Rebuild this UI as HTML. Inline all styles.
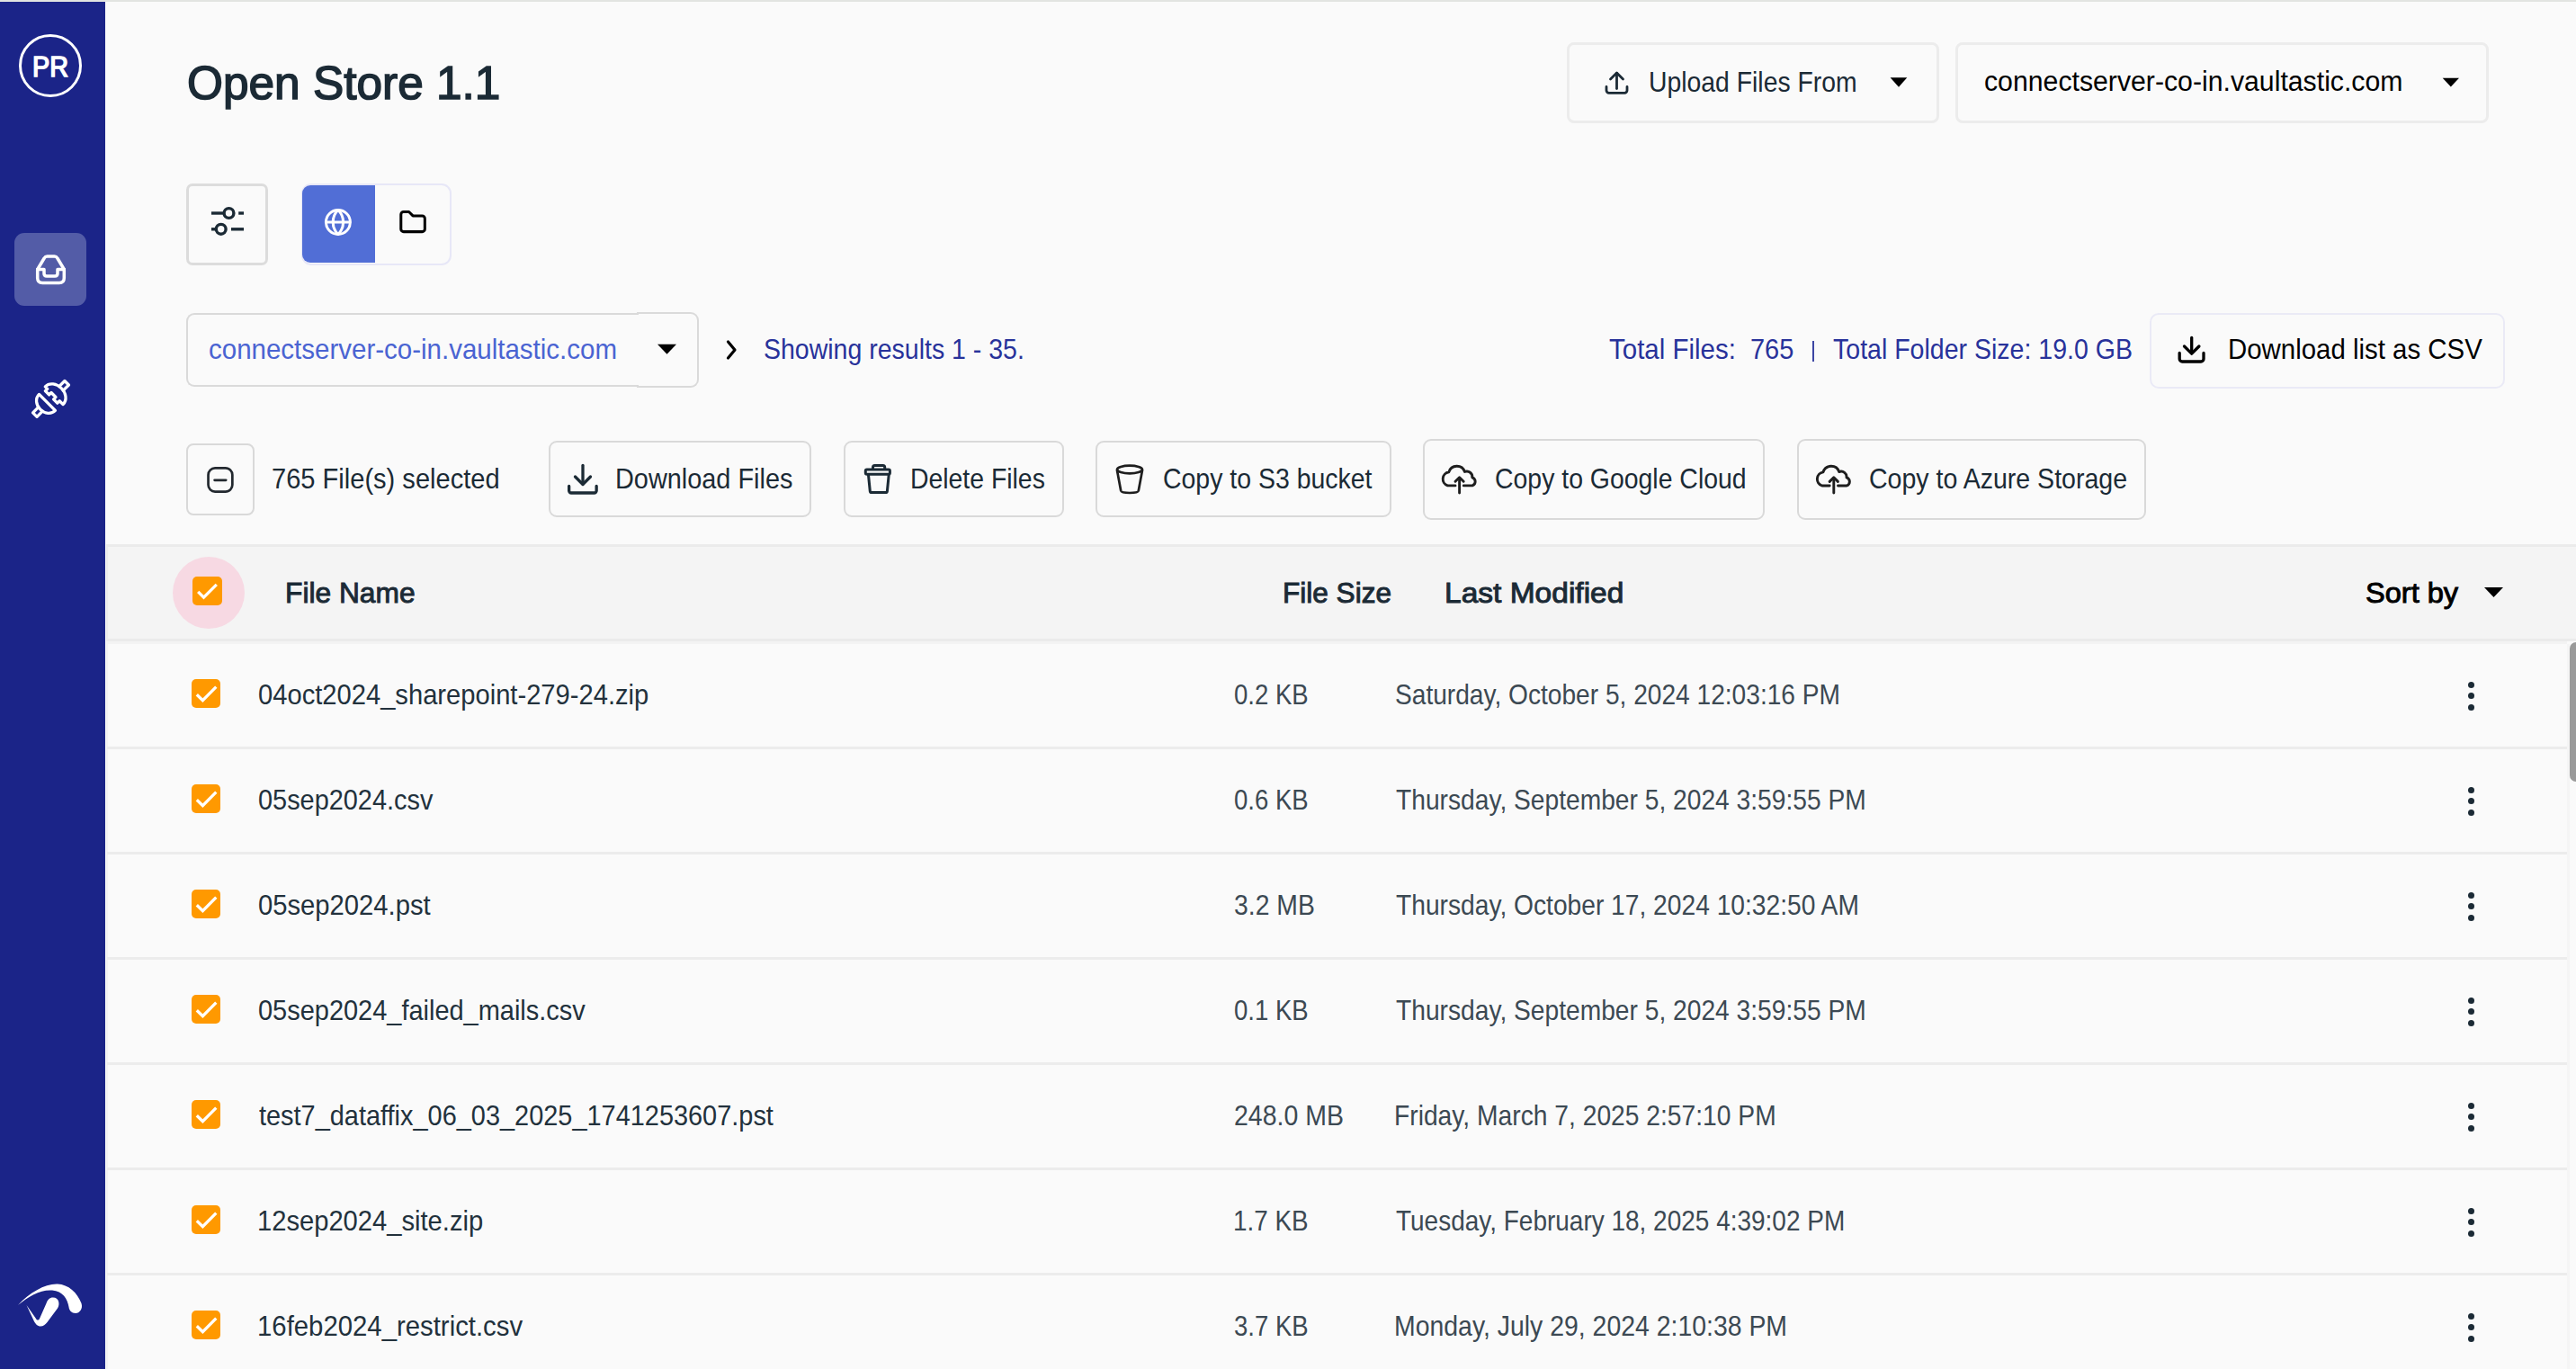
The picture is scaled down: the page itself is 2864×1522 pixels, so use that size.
<!DOCTYPE html>
<html><head><meta charset="utf-8"><title>Open Store 1.1</title>
<style>
html,body{margin:0;padding:0}
body{width:2864px;height:1522px;overflow:hidden;position:relative;background:#fafafa;font-family:"Liberation Sans",sans-serif}
.a{position:absolute;box-sizing:border-box}
.t{position:absolute;white-space:nowrap;line-height:1;transform-origin:0 0}
.btn{position:absolute;box-sizing:border-box;border:2px solid #d9d9d9;border-radius:9px}
svg.i{position:absolute;overflow:visible}
</style></head><body>
<div class="a" style="left:0;top:0;width:2864px;height:2px;background:#e2e4e1"></div>
<!-- sidebar -->
<nav class="a" style="left:0;top:2px;width:117px;height:1520px;background:#1b2488">
</nav>
<div class="a" style="left:117px;top:2px;width:1px;height:1520px;background:#fdfdfb"></div>
<div class="a" style="left:21px;top:38px;width:70px;height:70px;border:3px solid #fff;border-radius:50%"></div>
<div class="a" style="left:16px;top:259px;width:80px;height:81px;border-radius:11px;background:#535ca7"></div>
<svg class="i" style="left:0;top:0" width="117" height="1522" viewBox="0 0 117 1522">
 <g fill="none" stroke="#fff" stroke-width="3.5" stroke-linecap="round" stroke-linejoin="round">
  <path d="M41.7 299.5 L49.2 287 Q50.3 285 52.5 285 L60.5 285 Q62.7 285 63.8 287 L71.3 299.5"/>
  <path d="M41.7 299.5 L41.7 309 Q41.7 314.5 47.2 314.5 L65.8 314.5 Q71.3 314.5 71.3 309 L71.3 299.5"/>
  <path d="M41.7 299.5 L49 299.5 L49 304 Q49 307 52 307 L61 307 Q64 307 64 304 L64 299.5 L71.3 299.5"/>
 </g>
 <g transform="translate(56.5 443.4) rotate(-45)" fill="none" stroke="#fff" stroke-width="3.3" stroke-linejoin="round" stroke-linecap="round">
  <path d="M-5.7 -12.7 L-5.7 12.7 C-12 12.7 -16.6 7 -16.6 0 C-16.6 -7 -12 -12.7 -5.7 -12.7 Z"/>
  <path d="M-16.6 -3.2 L-25 -3.2 L-25 3.2 L-16.6 3.2"/>
  <path d="M5.2 -14 L5.2 -10.5 L1.8 -10.5 L1.8 -4.5 L5.2 -4.5 L5.2 2.5 L1.8 2.5 L1.8 8.5 L5.2 8.5 L5.2 14 C12 14 16.6 7.5 16.6 0 C16.6 -7.5 12 -14 5.2 -14 Z"/>
  <path d="M16.6 -3.2 L25 -3.2 L25 3.2 L16.6 3.2"/>
 </g>
 <g fill="#fff">
  <path d="M20 1451 C 33 1437, 50 1427, 64 1427.5 C 76 1428, 86 1437, 90.5 1449 C 92.5 1455, 88.5 1460, 84 1460 C 79.5 1460, 77 1457, 76.5 1453 C 75 1444, 70 1435.5, 58 1434.5 C 45 1433.5, 32 1441, 20 1451 Z"/>
  <path d="M29.5 1451 L37 1467 C 39 1472, 42 1474.5, 45 1474.5 C 48 1474.5, 50.5 1472.5, 52.5 1470 L64 1454.5 C 67 1450, 65.5 1442.5, 59 1442.5 C 55 1442.5, 53 1445, 51.5 1449 L 44 1466 C 43 1468, 41 1468, 40 1466 Z"/>
 </g>
</svg>

<!-- top right buttons -->
<div class="a" style="left:1741.8px;top:46.8px;width:414.4px;height:90px;border:3px solid #ececec;border-radius:8px"></div>
<div class="a" style="left:2173.8px;top:47px;width:593.6px;height:89.8px;border:3px solid #ececec;border-radius:8px"></div>
<svg class="i" style="left:1740px;top:40px" width="1040" height="110" viewBox="1740 40 1040 110">
 <g fill="none" stroke="#1b2a35" stroke-width="2.8" stroke-linecap="round" stroke-linejoin="round">
  <path d="M1786 96.5 v4 a2.8 2.8 0 0 0 2.8 2.8 h17.4 a2.8 2.8 0 0 0 2.8 -2.8 v-4"/>
  <path d="M1790.5 88 L1797.5 81 L1804.5 88"/>
  <path d="M1797.5 81.5 V98.5"/>
 </g>
 <path d="M2101.6 86.3 L2120.3 86.3 L2111 96.7 Z" fill="#000"/>
 <path d="M2715.7 86.8 L2734 86.8 L2724.85 96.5 Z" fill="#000"/>
</svg>

<!-- filter / toggle -->
<div class="a" style="left:207px;top:204px;width:91px;height:91px;border:3px solid #dcdcdc;border-radius:7px"></div>
<div class="a" style="left:334.5px;top:204px;width:167px;height:90.5px;border:2px solid #e7e7f7;border-radius:11px"></div>
<div class="a" style="left:336px;top:206px;width:81px;height:86px;background:#516ed6;border-radius:9px 0 0 9px"></div>
<svg class="i" style="left:200px;top:200px" width="300" height="100" viewBox="200 200 300 100">
 <g fill="none" stroke="#1b2a35" stroke-width="3.4">
  <path d="M235 237 H248.3"/><circle cx="254.5" cy="237" r="5.4"/><path d="M265.2 237 H271"/>
  <path d="M235 254.8 H239.7"/><circle cx="245.7" cy="254.8" r="5.4"/><path d="M257 254.8 H271"/>
 </g>
 <g fill="none" stroke="#fff" stroke-width="3" stroke-linecap="round">
  <circle cx="375.9" cy="247" r="13.5"/><path d="M363 247 H388.8"/><path d="M375.9 233.5 A18.8 18.8 0 0 0 375.9 260.5"/><path d="M375.9 233.5 A18.8 18.8 0 0 1 375.9 260.5"/>
 </g>
 <g transform="translate(441.35 229.6) scale(1.475)" fill="none" stroke="#000" stroke-width="2.05" stroke-linecap="round" stroke-linejoin="round">
  <path d="M5 4h4l3 3h7a2 2 0 0 1 2 2v8a2 2 0 0 1 -2 2h-14a2 2 0 0 1 -2 -2v-11a2 2 0 0 1 2 -2"/>
 </g>
</svg>

<!-- select row -->
<div class="a" style="left:207px;top:348px;width:503px;height:82px;border:2.2px solid #dadada;border-right:none;border-radius:9px 0 0 9px"></div>
<div class="a" style="left:708px;top:347px;width:68.8px;height:84px;border:2.2px solid #dadada;border-left:none;border-radius:0 9px 9px 0"></div>
<div class="a" style="left:2390px;top:347.5px;width:395px;height:84px;border:2.5px solid #eaeaf6;border-radius:10px"></div>
<svg class="i" style="left:700px;top:340px" width="2100" height="100" viewBox="700 340 2100 100">
 <path d="M731 382.7 L752 382.7 L741.5 393.75 Z" fill="#000"/>
 <path d="M809.5 380 L817 389 L809.5 398" fill="none" stroke="#000" stroke-width="3.2" stroke-linecap="round" stroke-linejoin="round"/>
 <path d="M2016 379 V402" stroke="#27319a" stroke-width="1.8"/>
 <g fill="none" stroke="#000" stroke-width="3.3" stroke-linecap="round" stroke-linejoin="round">
  <path d="M2423.2 392.5 v6.5 a3 3 0 0 0 3 3 h20.8 a3 3 0 0 0 3 -3 v-6.5"/>
  <path d="M2428.5 385 L2436.7 393.2 L2444.9 385"/>
  <path d="M2436.7 375.5 V392.5"/>
 </g>
</svg>

<!-- action row -->
<div class="btn" style="left:207px;top:493px;width:76px;height:80px;border-width:2.2px;border-radius:8px"></div>
<div class="btn" style="left:609.7px;top:489.7px;width:292.4px;height:85.6px"></div>
<div class="btn" style="left:937.5px;top:489.7px;width:245.0px;height:85.6px"></div>
<div class="btn" style="left:1217.5px;top:489.7px;width:329.0px;height:85.2px"></div>
<div class="btn" style="left:1581.9px;top:487.6px;width:379.9px;height:90.3px"></div>
<div class="btn" style="left:1997.9px;top:487.9px;width:388.5px;height:90.1px"></div>
<svg class="i" style="left:200px;top:480px" width="2200" height="110" viewBox="200 480 2200 110">
 <g fill="none" stroke="#22282e" stroke-width="2.7" stroke-linecap="round" stroke-linejoin="round">
  <rect x="231.55" y="520.45" width="26.8" height="26.1" rx="7.5"/>
  <path d="M238.6 533.8 H251.2"/>
 </g>
 <g fill="none" stroke="#1b2a35" stroke-width="3.3" stroke-linecap="round" stroke-linejoin="round">
  <path d="M632.65 540.5 v5 a2.5 2.5 0 0 0 2.5 2.5 h25.5 a2.5 2.5 0 0 0 2.5 -2.5 v-5"/>
  <path d="M639.5 530 L648 538.5 L656.5 530"/>
  <path d="M648 517.5 V538"/>
 </g>
 <g fill="none" stroke="#1b2a35" stroke-width="3" stroke-linecap="round" stroke-linejoin="round">
  <rect x="962.3" y="521.9" width="27.1" height="5.4" rx="1.5"/>
  <path d="M970.5 521.5 V519.5 a2 2 0 0 1 2 -2 h9.2 a2 2 0 0 1 2 2 V521.5"/>
  <path d="M965.5 528 L967.3 546 a1.8 1.8 0 0 0 1.8 1.6 h15.5 a1.8 1.8 0 0 0 1.8 -1.6 L988.2 528"/>
 </g>
 <g fill="none" stroke="#1e1e1e" stroke-width="2.7" stroke-linecap="round" stroke-linejoin="round">
  <ellipse cx="1256" cy="522" rx="14" ry="4.3"/>
  <path d="M1242 523 L1246.2 545.5 Q1246.8 548 1256 548 Q1265.2 548 1265.8 545.5 L1270 523"/>
 </g>
 <g fill="none" stroke="#1e1e1e" stroke-width="2.9" stroke-linecap="round" stroke-linejoin="round"><path d="M1618 539.9 H1609.5 A7.8 7.8 0 0 1 1610.8 524.8 A9.3 9.3 0 0 1 1628.5 524.5 A6 6 0 0 1 1636.8 530.8 A4.8 4.8 0 0 1 1637 539.9 H1627.3"/><path d="M1622.6 548 V531.5"/><path d="M1618 535.3 L1622.6 530.7 L1627.2 535.3"/></g>
 <g transform="translate(416.2 0.1)" fill="none" stroke="#1e1e1e" stroke-width="2.9" stroke-linecap="round" stroke-linejoin="round"><path d="M1618 539.9 H1609.5 A7.8 7.8 0 0 1 1610.8 524.8 A9.3 9.3 0 0 1 1628.5 524.5 A6 6 0 0 1 1636.8 530.8 A4.8 4.8 0 0 1 1637 539.9 H1627.3"/><path d="M1622.6 548 V531.5"/><path d="M1618 535.3 L1622.6 530.7 L1627.2 535.3"/></g>
</svg>

<!-- table -->
<div class="a" style="left:118px;top:605px;width:2746px;height:108px;background:#f4f4f4;border-top:3px solid #ebebeb;border-bottom:3px solid #ebebeb;border-left:2px solid #ececec"></div>
<div class="a" style="left:118px;top:713px;width:2736px;height:3px;background:#f3f3f3"></div>
<div class="a" style="left:118px;top:716px;width:2px;height:806px;background:#f3f3f3"></div>
<div class="a" style="left:192px;top:618.8px;width:80px;height:80px;border-radius:50%;background:#f7d9e3"></div>
<div class="a" style="left:214px;top:641px;width:33px;height:32px;border-radius:5px;background:#ff9900"></div>
<svg class="i" style="left:2750px;top:640px" width="40" height="30" viewBox="2750 640 40 30"><path d="M2762 653 L2783 653 L2772.5 664 Z" fill="#000"/></svg>
<div id="rows">
<div class="a" style="left:119px;top:830px;width:2735px;height:3px;background:#ececec"></div>
<div class="a" style="left:213px;top:755px;width:32px;height:32px;border-radius:5px;background:#ff9900"></div>
<div class="a" style="left:2743.6px;top:757.5px;width:7.2px;height:7.2px;border-radius:50%;background:#1b2a35"></div>
<div class="a" style="left:2743.6px;top:770.0px;width:7.2px;height:7.2px;border-radius:50%;background:#1b2a35"></div>
<div class="a" style="left:2743.6px;top:782.8px;width:7.2px;height:7.2px;border-radius:50%;background:#1b2a35"></div>
<div class="a" style="left:119px;top:947px;width:2735px;height:3px;background:#ececec"></div>
<div class="a" style="left:213px;top:872px;width:32px;height:32px;border-radius:5px;background:#ff9900"></div>
<div class="a" style="left:2743.6px;top:874.5px;width:7.2px;height:7.2px;border-radius:50%;background:#1b2a35"></div>
<div class="a" style="left:2743.6px;top:887.0px;width:7.2px;height:7.2px;border-radius:50%;background:#1b2a35"></div>
<div class="a" style="left:2743.6px;top:899.8px;width:7.2px;height:7.2px;border-radius:50%;background:#1b2a35"></div>
<div class="a" style="left:119px;top:1064px;width:2735px;height:3px;background:#ececec"></div>
<div class="a" style="left:213px;top:989px;width:32px;height:32px;border-radius:5px;background:#ff9900"></div>
<div class="a" style="left:2743.6px;top:991.5px;width:7.2px;height:7.2px;border-radius:50%;background:#1b2a35"></div>
<div class="a" style="left:2743.6px;top:1004.0px;width:7.2px;height:7.2px;border-radius:50%;background:#1b2a35"></div>
<div class="a" style="left:2743.6px;top:1016.8px;width:7.2px;height:7.2px;border-radius:50%;background:#1b2a35"></div>
<div class="a" style="left:119px;top:1181px;width:2735px;height:3px;background:#ececec"></div>
<div class="a" style="left:213px;top:1106px;width:32px;height:32px;border-radius:5px;background:#ff9900"></div>
<div class="a" style="left:2743.6px;top:1108.5px;width:7.2px;height:7.2px;border-radius:50%;background:#1b2a35"></div>
<div class="a" style="left:2743.6px;top:1121.0px;width:7.2px;height:7.2px;border-radius:50%;background:#1b2a35"></div>
<div class="a" style="left:2743.6px;top:1133.8px;width:7.2px;height:7.2px;border-radius:50%;background:#1b2a35"></div>
<div class="a" style="left:119px;top:1298px;width:2735px;height:3px;background:#ececec"></div>
<div class="a" style="left:213px;top:1223px;width:32px;height:32px;border-radius:5px;background:#ff9900"></div>
<div class="a" style="left:2743.6px;top:1225.5px;width:7.2px;height:7.2px;border-radius:50%;background:#1b2a35"></div>
<div class="a" style="left:2743.6px;top:1238.0px;width:7.2px;height:7.2px;border-radius:50%;background:#1b2a35"></div>
<div class="a" style="left:2743.6px;top:1250.8px;width:7.2px;height:7.2px;border-radius:50%;background:#1b2a35"></div>
<div class="a" style="left:119px;top:1415px;width:2735px;height:3px;background:#ececec"></div>
<div class="a" style="left:213px;top:1340px;width:32px;height:32px;border-radius:5px;background:#ff9900"></div>
<div class="a" style="left:2743.6px;top:1342.5px;width:7.2px;height:7.2px;border-radius:50%;background:#1b2a35"></div>
<div class="a" style="left:2743.6px;top:1355.0px;width:7.2px;height:7.2px;border-radius:50%;background:#1b2a35"></div>
<div class="a" style="left:2743.6px;top:1367.8px;width:7.2px;height:7.2px;border-radius:50%;background:#1b2a35"></div>
<div class="a" style="left:119px;top:1532px;width:2735px;height:3px;background:#ececec"></div>
<div class="a" style="left:213px;top:1457px;width:32px;height:32px;border-radius:5px;background:#ff9900"></div>
<div class="a" style="left:2743.6px;top:1459.5px;width:7.2px;height:7.2px;border-radius:50%;background:#1b2a35"></div>
<div class="a" style="left:2743.6px;top:1472.0px;width:7.2px;height:7.2px;border-radius:50%;background:#1b2a35"></div>
<div class="a" style="left:2743.6px;top:1484.8px;width:7.2px;height:7.2px;border-radius:50%;background:#1b2a35"></div>
</div>
<div class="a" style="left:2854px;top:716px;width:2.5px;height:806px;background:#f5f5f5"></div>
<div class="a" style="left:2857px;top:714px;width:7px;height:155px;background:#999;border-radius:7px 0 0 7px"></div>
<svg class="i" style="left:200px;top:600px" width="60" height="900" viewBox="200 600 60 900">
 <path d="M220.2 657.9 L226.5 664.2 L240.8 649.9" fill="none" stroke="#fff" stroke-width="3.3"/>
<path d="M218.8 772.2 L225.4 778.6 L240.3 763.7" fill="none" stroke="#fff" stroke-width="3.3"/>
<path d="M218.8 889.2 L225.4 895.6 L240.3 880.7" fill="none" stroke="#fff" stroke-width="3.3"/>
<path d="M218.8 1006.2 L225.4 1012.6 L240.3 997.7" fill="none" stroke="#fff" stroke-width="3.3"/>
<path d="M218.8 1123.2 L225.4 1129.6 L240.3 1114.7" fill="none" stroke="#fff" stroke-width="3.3"/>
<path d="M218.8 1240.2 L225.4 1246.6 L240.3 1231.7" fill="none" stroke="#fff" stroke-width="3.3"/>
<path d="M218.8 1357.2 L225.4 1363.6 L240.3 1348.7" fill="none" stroke="#fff" stroke-width="3.3"/>
<path d="M218.8 1474.2 L225.4 1480.6 L240.3 1465.7" fill="none" stroke="#fff" stroke-width="3.3"/>
</svg>
<div class="t" style="left:36.12px;top:59.26px;font-size:30.64px;font-weight:400;color:#ffffff;transform:scaleX(0.9402);-webkit-text-stroke:1.53px #ffffff;">PR</div>
<div class="t" style="left:207.64px;top:65.80px;font-size:52.44px;font-weight:400;color:#1b2a35;transform:scaleX(0.9797);-webkit-text-stroke:1.57px #1b2a35;">Open Store 1.1</div>
<div class="t" style="left:1833.49px;top:75.82px;font-size:31.4px;font-weight:400;color:#1b2a35;transform:scaleX(0.9033);">Upload Files From</div>
<div class="t" style="left:2205.95px;top:75.06px;font-size:31.82px;font-weight:400;color:#000;transform:scaleX(0.9505);">connectserver-co-in.vaultastic.com</div>
<div class="t" style="left:232.27px;top:372.82px;font-size:31.63px;font-weight:400;color:#4a64d2;transform:scaleX(0.9325);">connectserver-co-in.vaultastic.com</div>
<div class="t" style="left:848.87px;top:373.16px;font-size:30.52px;font-weight:400;color:#28329a;transform:scaleX(0.9338);">Showing results 1 - 35.</div>
<div class="t" style="left:1789.30px;top:373.36px;font-size:30.52px;font-weight:400;color:#28329a;transform:scaleX(0.9661);">Total Files:</div>
<div class="t" style="left:1945.55px;top:373.36px;font-size:30.52px;font-weight:400;color:#28329a;transform:scaleX(0.9501);">765</div>
<div class="t" style="left:2038.40px;top:373.36px;font-size:30.52px;font-weight:400;color:#28329a;transform:scaleX(0.9348);">Total Folder Size: 19.0 GB</div>
<div class="t" style="left:2476.81px;top:373.27px;font-size:31.1px;font-weight:400;color:#000;transform:scaleX(0.9457);">Download list as CSV</div>
<div class="t" style="left:301.57px;top:517.17px;font-size:31.1px;font-weight:400;color:#1b2a35;transform:scaleX(0.9348);">765 File(s) selected</div>
<div class="t" style="left:683.64px;top:517.07px;font-size:31.1px;font-weight:400;color:#1b2a35;transform:scaleX(0.9285);">Download Files</div>
<div class="t" style="left:1011.67px;top:517.07px;font-size:31.1px;font-weight:400;color:#1b2a35;transform:scaleX(0.9126);">Delete Files</div>
<div class="t" style="left:1292.68px;top:516.97px;font-size:31.1px;font-weight:400;color:#1b2a35;transform:scaleX(0.9150);">Copy to S3 bucket</div>
<div class="t" style="left:1662.29px;top:516.97px;font-size:31.1px;font-weight:400;color:#1b2a35;transform:scaleX(0.9139);">Copy to Google Cloud</div>
<div class="t" style="left:2077.88px;top:516.97px;font-size:31.1px;font-weight:400;color:#1b2a35;transform:scaleX(0.9175);">Copy to Azure Storage</div>
<div class="t" style="left:316.73px;top:643.16px;font-size:32.17px;font-weight:400;color:#1b2a35;transform:scaleX(0.9867);-webkit-text-stroke:0.97px #1b2a35;">File Name</div>
<div class="t" style="left:1425.94px;top:642.96px;font-size:32.17px;font-weight:400;color:#1b2a35;transform:scaleX(0.9810);-webkit-text-stroke:0.97px #1b2a35;">File Size</div>
<div class="t" style="left:1605.92px;top:642.96px;font-size:32.17px;font-weight:400;color:#1b2a35;transform:scaleX(1.0425);-webkit-text-stroke:0.97px #1b2a35;">Last Modified</div>
<div class="t" style="left:2629.99px;top:643.46px;font-size:32.17px;font-weight:400;color:#000;transform:scaleX(1.0122);-webkit-text-stroke:0.97px #000;">Sort by</div>
<div class="t" style="left:286.54px;top:757.46px;font-size:30.52px;font-weight:400;color:#22313c;transform:scaleX(0.9551);">04oct2024_sharepoint-279-24.zip</div>
<div class="t" style="left:1372.00px;top:757.46px;font-size:30.52px;font-weight:400;color:#3c4953;transform:scaleX(0.9019);">0.2 KB</div>
<div class="t" style="left:1550.98px;top:757.46px;font-size:30.52px;font-weight:400;color:#3c4953;transform:scaleX(0.9214);">Saturday, October 5, 2024 12:03:16 PM</div>
<div class="t" style="left:286.55px;top:874.46px;font-size:30.52px;font-weight:400;color:#22313c;transform:scaleX(0.9467);">05sep2024.csv</div>
<div class="t" style="left:1372.00px;top:874.46px;font-size:30.52px;font-weight:400;color:#3c4953;transform:scaleX(0.9019);">0.6 KB</div>
<div class="t" style="left:1551.90px;top:874.46px;font-size:30.52px;font-weight:400;color:#3c4953;transform:scaleX(0.9236);">Thursday, September 5, 2024 3:59:55 PM</div>
<div class="t" style="left:286.54px;top:991.46px;font-size:30.52px;font-weight:400;color:#22313c;transform:scaleX(0.9573);">05sep2024.pst</div>
<div class="t" style="left:1371.97px;top:991.46px;font-size:30.52px;font-weight:400;color:#3c4953;transform:scaleX(0.9288);">3.2 MB</div>
<div class="t" style="left:1551.90px;top:991.46px;font-size:30.52px;font-weight:400;color:#3c4953;transform:scaleX(0.9235);">Thursday, October 17, 2024 10:32:50 AM</div>
<div class="t" style="left:286.55px;top:1108.46px;font-size:30.52px;font-weight:400;color:#22313c;transform:scaleX(0.9488);">05sep2024_failed_mails.csv</div>
<div class="t" style="left:1372.00px;top:1108.46px;font-size:30.52px;font-weight:400;color:#3c4953;transform:scaleX(0.9019);">0.1 KB</div>
<div class="t" style="left:1551.90px;top:1108.46px;font-size:30.52px;font-weight:400;color:#3c4953;transform:scaleX(0.9236);">Thursday, September 5, 2024 3:59:55 PM</div>
<div class="t" style="left:287.50px;top:1225.46px;font-size:30.52px;font-weight:400;color:#22313c;transform:scaleX(0.9476);">test7_dataffix_06_03_2025_1741253607.pst</div>
<div class="t" style="left:1371.97px;top:1225.46px;font-size:30.52px;font-weight:400;color:#3c4953;transform:scaleX(0.9340);">248.0 MB</div>
<div class="t" style="left:1550.05px;top:1225.46px;font-size:30.52px;font-weight:400;color:#3c4953;transform:scaleX(0.9251);">Friday, March 7, 2025 2:57:10 PM</div>
<div class="t" style="left:285.59px;top:1342.46px;font-size:30.52px;font-weight:400;color:#22313c;transform:scaleX(0.9550);">12sep2024_site.zip</div>
<div class="t" style="left:1371.08px;top:1342.46px;font-size:30.52px;font-weight:400;color:#3c4953;transform:scaleX(0.9122);">1.7 KB</div>
<div class="t" style="left:1551.90px;top:1342.46px;font-size:30.52px;font-weight:400;color:#3c4953;transform:scaleX(0.9168);">Tuesday, February 18, 2025 4:39:02 PM</div>
<div class="t" style="left:285.58px;top:1459.46px;font-size:30.52px;font-weight:400;color:#22313c;transform:scaleX(0.9612);">16feb2024_restrict.csv</div>
<div class="t" style="left:1372.00px;top:1459.46px;font-size:30.52px;font-weight:400;color:#3c4953;transform:scaleX(0.9019);">3.7 KB</div>
<div class="t" style="left:1550.04px;top:1459.46px;font-size:30.52px;font-weight:400;color:#3c4953;transform:scaleX(0.9312);">Monday, July 29, 2024 2:10:38 PM</div>
</body></html>
